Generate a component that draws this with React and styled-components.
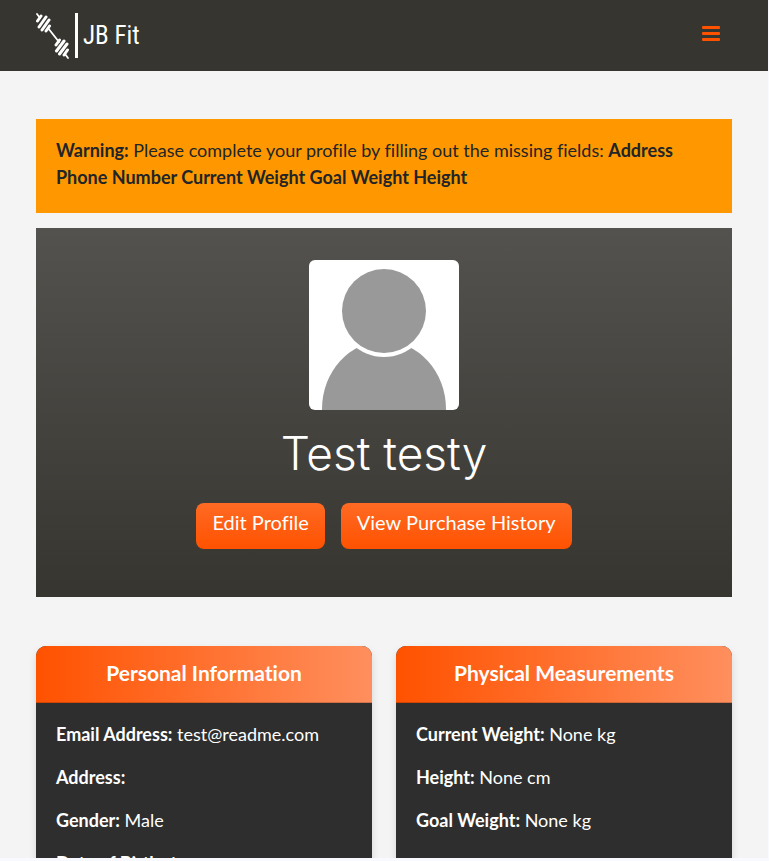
import React from "react";
import styled, { createGlobalStyle } from "styled-components";

const GlobalStyle = createGlobalStyle`
  *, *::before, *::after { box-sizing: border-box; }
  body {
    margin: 0;
    background: #f9faff;
    color: #212529;
    font-family: Lato, "Open Sans", sans-serif;
    font-size: 18px;
    font-variant-ligatures: none;
    line-height: 27px;
  }
`;

const Screen = styled.div`
  height: calc(100vh - 3px);
  margin-right: 1px;
  overflow-y: auto;
  scrollbar-width: none;
  background: #f4f4f4;
`;

const Navbar = styled.header`
  display: flex;
  align-items: center;
  justify-content: space-between;
  padding: 12px 36px;
  background: #363530;
`;

const Brand = styled.a`
  display: flex;
  align-items: center;
  height: 47px;
  color: #fff;
  text-decoration: none;
`;

const BrandMark = styled.svg`
  display: block;
  width: 33px;
  height: 47px;
`;

const BrandName = styled.span`
  margin-left: 6px;
  padding-left: 5px;
  border-left: 3px solid #fff;
  font-family: "Roboto Condensed", "DejaVu Sans Condensed", sans-serif;
  font-size: 25px;
  line-height: 45px;
  white-space: nowrap;
`;

const MenuButton = styled.button`
  display: flex;
  align-items: center;
  justify-content: center;
  width: 42px;
  height: 40px;
  margin-bottom: 4px;
  padding: 0;
  border: 0;
  background: none;
  color: #ff5200;
  cursor: pointer;
`;

const Main = styled.main`
  padding: 48px 36px 36px;
`;

const Alert = styled.p`
  margin: 0 0 15px;
  padding: 18px 20px 22px;
  background: #ff9800;
`;

const Hero = styled.section`
  display: flex;
  flex-direction: column;
  align-items: center;
  padding: 32px 20px 48px;
  background: linear-gradient(#53524e, #363530);
`;

const Avatar = styled.svg`
  display: block;
  width: 150px;
  height: 150px;
  border-radius: 6px;
  background: #fff;
`;

const UserName = styled.h1`
  margin: 16px 0 23px;
  color: #fff;
  font-family: Inter, Lato, sans-serif;
  font-size: 46px;
  font-weight: 300;
  line-height: 54px;
`;

const Actions = styled.div`
  display: flex;
  flex-wrap: wrap;
  justify-content: center;
  gap: 16px;
`;

const ActionLink = styled.a`
  padding: 4px 16px 12px;
  border-radius: 8px;
  background: linear-gradient(#ff6a24, #ff5200);
  color: #fff;
  font-size: 20px;
  line-height: 30px;
  text-decoration: none;
`;

const Cards = styled.div`
  display: grid;
  grid-template-columns: repeat(auto-fit, minmax(280px, 1fr));
  gap: 24px;
  margin-top: 49px;
`;

const Card = styled.section`
  overflow: hidden;
  border-radius: 10px;
  background: #2e2e2e;
  box-shadow: 0 4px 8px rgba(0, 0, 0, 0.12);
  color: #fff;
`;

const CardTitle = styled.h2`
  margin: 0;
  padding: 12px 20px 14px;
  border-bottom: 1px solid rgba(0, 0, 0, 0.18);
  background: linear-gradient(to right, #ff5200, #ff8f5e);
  font-size: 21px;
  font-weight: 700;
  line-height: 30px;
  text-align: center;
`;

const Fields = styled.div`
  display: flex;
  flex-direction: column;
  gap: 16px;
  padding: 18px 20px 24px;
`;

const Field = styled.p`
  margin: 0;
`;

function Dumbbell() {
  return (
    <BrandMark viewBox="0 0 33 47" fill="none" stroke="#fff" strokeLinecap="round" aria-hidden="true">
      <path d="M1 2L4 6M12 16L23 30M29 42L32 46" strokeWidth="1.8" />
      <path d="M1.5 9L5 4M3 15L10 5M6 18L13 8M10 19L13.5 14" strokeWidth="3" />
      <path d="M20 33L23.5 28M20.5 39L28 29M23.5 42L31 32M28 43L31.5 38" strokeWidth="3" />
    </BrandMark>
  );
}

const groups = [
  {
    title: "Personal Information",
    fields: [
      ["Email Address", "test@readme.com"],
      ["Address", ""],
      ["Gender", "Male"],
      ["Date of Birth", "J"],
    ],
  },
  {
    title: "Physical Measurements",
    fields: [
      ["Current Weight", "None kg"],
      ["Height", "None cm"],
      ["Goal Weight", "None kg"],
    ],
  },
];

export default function App() {
  return (
    <>
      <GlobalStyle />
      <Screen>
        <Navbar>
          <Brand href="#">
            <Dumbbell />
            <BrandName>JB Fit</BrandName>
          </Brand>
          <MenuButton type="button" aria-label="Open menu">
            <svg width="18" height="16" viewBox="0 0 18 16" fill="currentColor" aria-hidden="true">
              <rect width="18" height="3" rx="1" />
              <rect y="6" width="18" height="3" rx="1" />
              <rect y="12" width="18" height="3" rx="1" />
            </svg>
          </MenuButton>
        </Navbar>
        <Main>
          <Alert role="alert">
            <strong>Warning:</strong> Please complete your profile by filling out the missing fields:{" "}
            <strong>Address Phone Number Current Weight Goal Weight Height</strong>
          </Alert>
          <Hero>
            <Avatar viewBox="0 0 150 150" fill="#999" role="img" aria-label="Profile picture">
              <ellipse cx="75" cy="149" rx="62" ry="68" />
              <circle cx="75" cy="51" r="46" fill="#fff" />
              <circle cx="75" cy="51" r="42" />
            </Avatar>
            <UserName>Test testy</UserName>
            <Actions>
              <ActionLink href="#">Edit Profile</ActionLink>
              <ActionLink href="#">View Purchase History</ActionLink>
            </Actions>
          </Hero>
          <Cards>
            {groups.map((group) => (
              <Card key={group.title}>
                <CardTitle>{group.title}</CardTitle>
                <Fields>
                  {group.fields.map(([label, value]) => (
                    <Field key={label}>
                      <strong>{label}:</strong> {value}
                    </Field>
                  ))}
                </Fields>
              </Card>
            ))}
          </Cards>
        </Main>
      </Screen>
    </>
  );
}
